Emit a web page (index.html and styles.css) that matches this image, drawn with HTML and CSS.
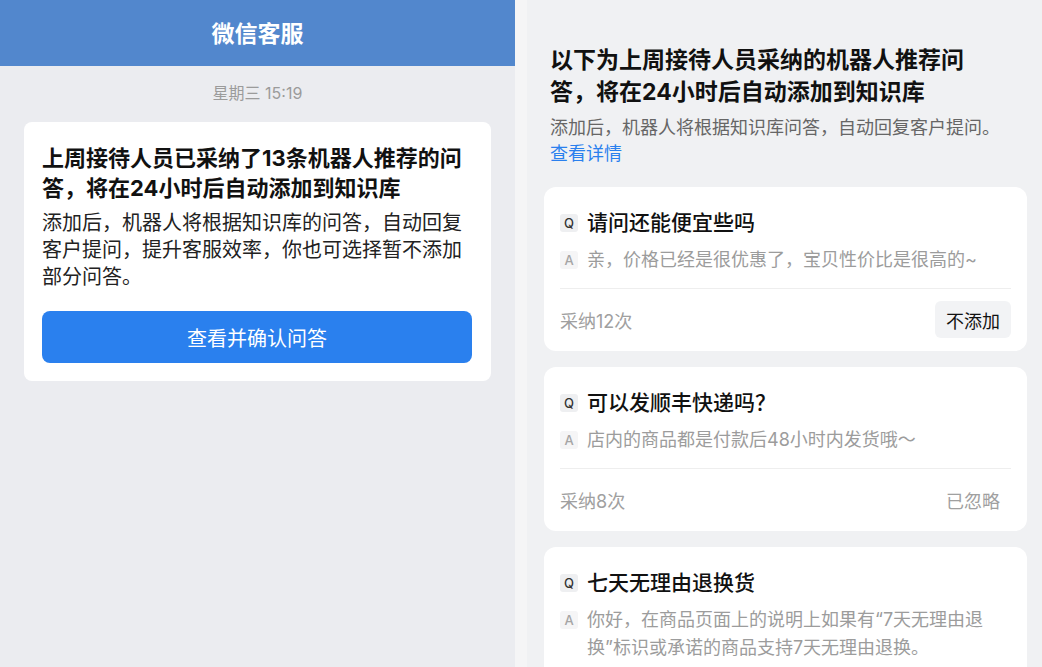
FILE: index.html
```html
<!DOCTYPE html>
<html lang="zh-CN">
<head>
    <meta charset="UTF-8">
    <meta name="viewport" content="width=device-width, initial-scale=1.0">
    <title>微信客服 - 知识库问答</title>
    <link rel="stylesheet" href="styles.css">
</head>
<body>
    <div class="page">
        <!-- Left: chat preview -->
        <section class="chat">
            <header class="chat-header">微信客服</header>
            <div class="chat-time">星期三 15:19</div>
            <div class="notice-card">
                <h3 class="notice-title">上周接待人员已采纳了13条机器人推荐的问答，将在24小时后自动添加到知识库</h3>
                <p class="notice-text">添加后，机器人将根据知识库的问答，自动回复客户提问，提升客服效率，你也可选择暂不添加部分问答。</p>
                <button class="notice-btn">查看并确认问答</button>
            </div>
        </section>

        <div class="divider-strip"></div>

        <!-- Right: recommended Q&A list -->
        <section class="qa-panel">
            <div class="qa-intro">
                <h2 class="qa-intro-title">以下为上周接待人员采纳的机器人推荐问答，将在24小时后自动添加到知识库</h2>
                <p class="qa-intro-text">添加后，机器人将根据知识库问答，自动回复客户提问。</p>
                <a href="#" class="link">查看详情</a>
            </div>

            <div class="qa-list" id="qa-list">
                <!-- cards rendered below -->
            </div>
        </section>
    </div>

    <script>
        // Q&A data
        const items = [
            { q: "请问还能便宜些吗", a: "亲，价格已经是很优惠了，宝贝性价比是很高的~", count: 12, ignored: false },
            { q: "可以发顺丰快递吗？", a: "店内的商品都是付款后48小时内发货哦～", count: 8, ignored: true },
            { q: "七天无理由退换货", a: "你好，在商品页面上的说明上如果有“7天无理由退换”标识或承诺的商品支持7天无理由退换。", count: 5, ignored: false }
        ];
        const list = document.getElementById('qa-list');

        items.forEach((item) => {
            const card = document.createElement('div');
            card.classList.add('qa-card');
            card.innerHTML = `
                <div class="qa-row qa-q">
                    <span class="badge badge-q">Q</span>
                    <span class="qa-text">${item.q}</span>
                </div>
                <div class="qa-row qa-a">
                    <span class="badge badge-a">A</span>
                    <span class="qa-text">${item.a}</span>
                </div>
                <div class="qa-footer">
                    <span class="qa-count">采纳${item.count}次</span>
                    ${item.ignored
                        ? '<span class="qa-ignored">已忽略</span>'
                        : '<button class="qa-skip">不添加</button>'}
                </div>
            `;
            list.appendChild(card);
        });
    </script>
</body>
</html>
```

FILE: styles.css
```css
* {
    box-sizing: border-box;
}
body {
    margin: 0;
    padding: 0;
    font-family: Inter, "Noto Sans CJK SC", sans-serif;
    background-color: #f0f1f3;
    overflow: hidden;
}
.page {
    display: flex;
    height: 667px;
}

/* left chat preview */
.chat {
    width: 515px;
    flex-shrink: 0;
    background-color: #ebecf0;
}
.chat-header {
    height: 66px;
    background-color: #5287cd;
    color: white;
    font-size: 23px;
    font-weight: bold;
    display: flex;
    align-items: center;
    justify-content: center;
    padding-bottom: 2px;
}
.chat-time {
    text-align: center;
    color: #9b9b9b;
    font-size: 16px;
    line-height: 22px;
    padding: 16px 0 18px;
}
.notice-card {
    margin: 0 24px;
    background: white;
    border-radius: 8px;
    padding: 21px 19px 18px 18px;
}
.notice-title {
    margin: 0;
    font-size: 22px;
    line-height: 30px;
    font-weight: bold;
    color: #111;
}
.notice-text {
    margin: 7px 0 0;
    font-size: 20px;
    line-height: 27px;
    color: #222;
}
.notice-btn {
    display: block;
    width: 100%;
    height: 52px;
    margin-top: 20px;
    border: none;
    border-radius: 8px;
    background-color: #2a80ee;
    color: white;
    font-family: inherit;
    font-size: 20px;
    cursor: pointer;
}

.divider-strip {
    width: 12px;
    flex-shrink: 0;
    background-color: #f5f5f6;
}

/* right list */
.qa-panel {
    flex: 1;
    padding: 0 15px 0 17px;
    background-color: #f0f1f3;
}
.qa-intro {
    padding: 44px 8px 20px 6px;
}
.qa-intro-title {
    margin: 0;
    padding-right: 38px;
    font-size: 23px;
    line-height: 32px;
    font-weight: bold;
    color: #111;
}
.qa-intro-text {
    margin: 7px 0 0;
    font-size: 18px;
    line-height: 26px;
    color: #666;
}
.link {
    display: block;
    font-size: 18px;
    line-height: 26px;
    color: #2a80ee;
    text-decoration: none;
}
.qa-list {
    display: flex;
    flex-direction: column;
    gap: 16px;
}
.qa-card {
    background: white;
    border-radius: 12px;
    padding: 22px 16px 13px;
}
.qa-row {
    display: flex;
    align-items: flex-start;
    gap: 9px;
}
.badge {
    flex-shrink: 0;
    width: 18px;
    height: 18px;
    margin-top: 5px;
    border-radius: 3px;
    font-size: 13px;
    line-height: 18px;
    text-align: center;
    font-weight: 500;
}
.badge-q {
    background-color: #eeeff1;
    color: #333;
}
.badge-a {
    background-color: #f5f5f6;
    color: #a5a5a5;
}
.qa-q .qa-text {
    font-size: 21px;
    line-height: 28px;
    font-weight: 500;
    color: #111;
}
.qa-a {
    margin-top: 9px;
    padding-right: 10px;
    padding-bottom: 14px;
    border-bottom: 1px solid #eeeeee;
}
.qa-a .qa-text {
    font-size: 18px;
    line-height: 28px;
    color: #9c9c9c;
}
.qa-footer {
    display: flex;
    justify-content: space-between;
    align-items: center;
    margin-top: 12px;
    height: 37px;
}
.qa-count {
    font-size: 18px;
    color: #a0a0a0;
}
.qa-skip {
    height: 37px;
    padding: 0 11px;
    border: none;
    border-radius: 6px;
    background-color: #f2f3f5;
    color: #111;
    font-family: inherit;
    font-size: 18px;
    cursor: pointer;
}
.qa-ignored {
    padding: 0 11px;
    font-size: 18px;
    color: #a0a0a0;
}
```
